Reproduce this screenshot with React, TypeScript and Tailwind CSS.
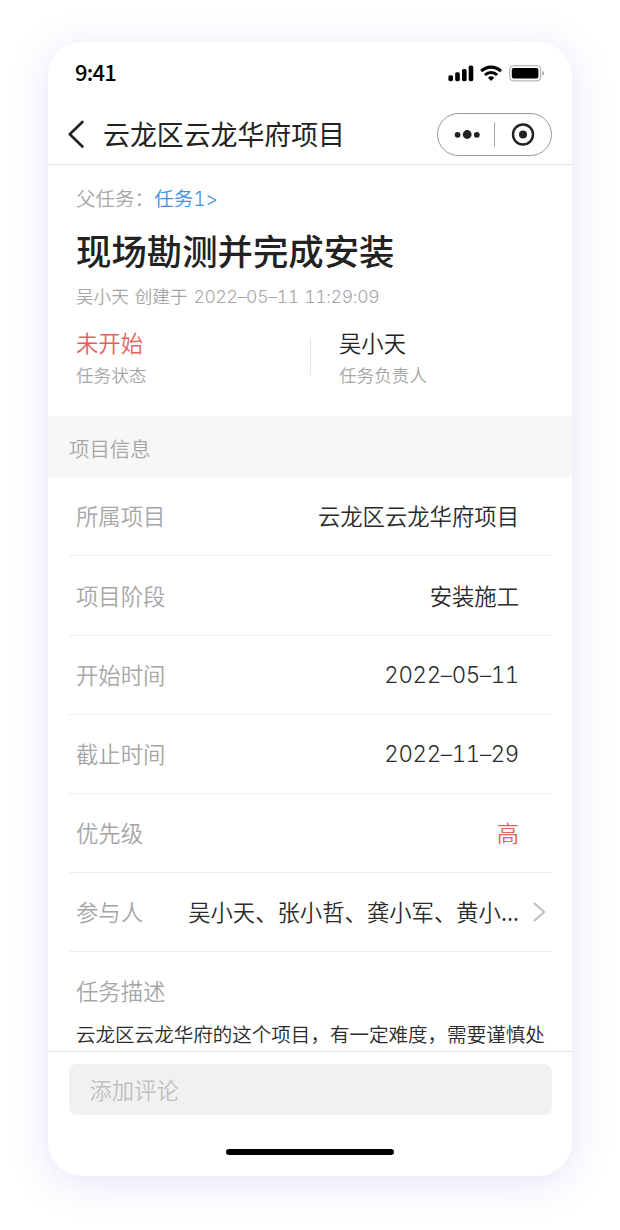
import type { ReactNode } from "react";

const cjk = "font-['Noto_Sans_CJK_SC',sans-serif]";
const digits = "font-['Inter','Noto_Sans_CJK_SC',sans-serif] font-[350] tabular-nums tracking-[-0.33px]";

function StatusBar() {
  return (
    <div className="flex h-[62px] shrink-0 items-center justify-between pl-[27px] pr-[28px]">
      <span className="pb-[4px] text-[22px] font-medium leading-[32px] tracking-[-0.8px] text-black">9:41</span>
      <svg width="96" height="17" viewBox="0 0 96 17" fill="none">
        <g fill="#000">
          <rect x="0.4" y="10.2" width="4.6" height="6" rx="1.6" />
          <rect x="7.2" y="7.2" width="4.6" height="9" rx="1.6" />
          <rect x="14" y="4" width="4.6" height="12.2" rx="1.6" />
          <rect x="20.7" y="0.6" width="4.6" height="15.6" rx="1.6" />
        </g>
        <g stroke="#000" strokeWidth="3.1">
          <path d="M33.2 6.2a14 14 0 0 1 19.8 0" />
          <path d="M37 10a8.8 8.8 0 0 1 12.2 0" />
        </g>
        <path d="M43.1 15.9l-3.1-3.2a4.6 4.6 0 0 1 6.2 0z" fill="#000" />
        <rect x="61.7" y="0.7" width="31" height="15.2" rx="3.6" stroke="#a6a6a6" strokeWidth="1" />
        <rect x="63.8" y="3" width="26.6" height="10.6" rx="1.8" fill="#000" />
        <path d="M94.4 6v4.6a2.4 2.4 0 0 0 0-4.6z" fill="#a6a6a6" />
      </svg>
    </div>
  );
}

function NavBar() {
  return (
    <div className="flex h-[61px] shrink-0 items-center border-b border-[#e3e3e3] pl-[20px] pr-[20px]">
      <svg width="16" height="28" viewBox="0 0 16 28" fill="none" stroke="#222" strokeWidth="2.6" strokeLinecap="round" strokeLinejoin="round">
        <path d="M14.4 2 1.8 14.3l12.6 12.2" />
      </svg>
      <span className="ml-[19px] flex-1 text-[26.9px] font-normal leading-[36px] text-[#222]">云龙区云龙华府项目</span>
      <div className="flex h-[43px] w-[115px] items-center rounded-full border border-[#999]">
        <svg width="113" height="41" viewBox="0 0 113 41" fill="none">
          <circle cx="19.6" cy="20.8" r="2.9" fill="#222" />
          <circle cx="29.2" cy="20.5" r="4.4" fill="#222" />
          <circle cx="38.8" cy="20.8" r="2.9" fill="#222" />
          <path d="M56.5 8.2v25" stroke="#a6a6a6" />
          <circle cx="85" cy="20.5" r="10" stroke="#222" strokeWidth="2.4" />
          <circle cx="85" cy="20.5" r="4" fill="#222" />
        </svg>
      </div>
    </div>
  );
}

function Summary() {
  return (
    <div className="h-[251px] shrink-0 pl-[28px]">
      <div className="pt-[17.5px] text-[19.55px] leading-[30px] text-[#a6a6a6]">
        父任务：<span className="text-[#4190e8]">任务<span className={digits}>1&gt;</span></span>
      </div>
      <h1 className="mt-[11px] text-[35.4px] font-medium leading-[50px] text-[#222]">现场勘测并完成安装</h1>
      <p className="mt-[7.5px] text-[17.6px] leading-[28px] text-[#a6a6a6] [word-spacing:2px]">
        吴小天 创建于 <span className={`${digits} [word-spacing:1px]`}>2022–05–11 11:29:09</span>
      </p>
      <div className="mt-[14px] flex">
        <div className="w-[234px]">
          <p className="text-[22.35px] leading-[34px] text-[#e0635e]">未开始</p>
          <p className="mt-[1px] text-[17.6px] leading-[30px] text-[#a6a6a6]">任务状态</p>
        </div>
        <div className="mt-[13px] h-[37px] w-px bg-[#e6e6e6]" />
        <div className="ml-[28px]">
          <p className="text-[22.35px] leading-[34px] text-[#222]">吴小天</p>
          <p className="mt-[1px] text-[17.6px] leading-[30px] text-[#a6a6a6]">任务负责人</p>
        </div>
      </div>
    </div>
  );
}

function Row({ label, children, arrow }: { label: string; children: ReactNode; arrow?: boolean }) {
  return (
    <div className="mx-[20.5px] flex h-[79.1px] shrink-0 items-center border-b border-[#efefef] pl-[7.5px] pr-[6px] text-[22.35px] leading-[32px]">
      <span className="pb-[2px] text-[#a6a6a6]">{label}</span>
      <div className="flex-1 pb-[2px] text-right text-[#2b2b2b]">{children}</div>
      <div className="ml-[13.5px] w-[13px]">
        {arrow && (
          <svg width="13" height="20" viewBox="0 0 13 20" fill="none" stroke="#bdbdbd" strokeWidth="2">
            <path d="M1 1l10 9-10 9" />
          </svg>
        )}
      </div>
    </div>
  );
}

export default function App() {
  return (
    <div className={`flex h-[1230px] w-[620px] justify-center bg-white pt-[42px] font-[350] ${cjk}`}>
      <main className="flex h-[1134px] w-[524px] flex-col overflow-hidden rounded-[34px] bg-white shadow-[0_6px_40px_rgba(90,90,225,0.17)]">
        <StatusBar />
        <NavBar />
        <Summary />
        <div className="flex h-[61.4px] shrink-0 items-center bg-[#f7f7f7] pl-[21px] pt-[3px] text-[20.4px] leading-[30px] text-[#a6a6a6]">项目信息</div>
        <section className="flex h-[573.6px] shrink-0 flex-col overflow-hidden">
          <Row label="所属项目">云龙区云龙华府项目</Row>
          <Row label="项目阶段">安装施工</Row>
          <Row label="开始时间"><span className={digits}>2022–05–11</span></Row>
          <Row label="截止时间"><span className={digits}>2022–11–29</span></Row>
          <Row label="优先级"><span className="text-[#e0635e]">高</span></Row>
          <Row label="参与人" arrow>吴小天、张小哲、龚小军、黄小...</Row>
          <div className="pl-[28px] pt-[22.5px]">
            <p className="text-[22.35px] leading-[32px] text-[#a6a6a6]">任务描述</p>
            <p className="mt-[12.5px] whitespace-nowrap text-[19.55px] leading-[30px] text-[#2b2b2b]">云龙区云龙华府的这个项目，有一定难度，需要谨慎处</p>
          </div>
        </section>
        <footer className="flex flex-1 flex-col items-center border-t border-[#e3e3e3] pt-[12px]">
          <div className="flex h-[51px] w-[483px] items-center rounded-[8px] bg-[#f1f1f1] pl-[21px] text-[22.35px] leading-[32px] text-[#c0c0c0]">添加评论</div>
          <div className="mt-[34px] h-[6px] w-[168px] rounded-full bg-black" />
        </footer>
      </main>
    </div>
  );
}
